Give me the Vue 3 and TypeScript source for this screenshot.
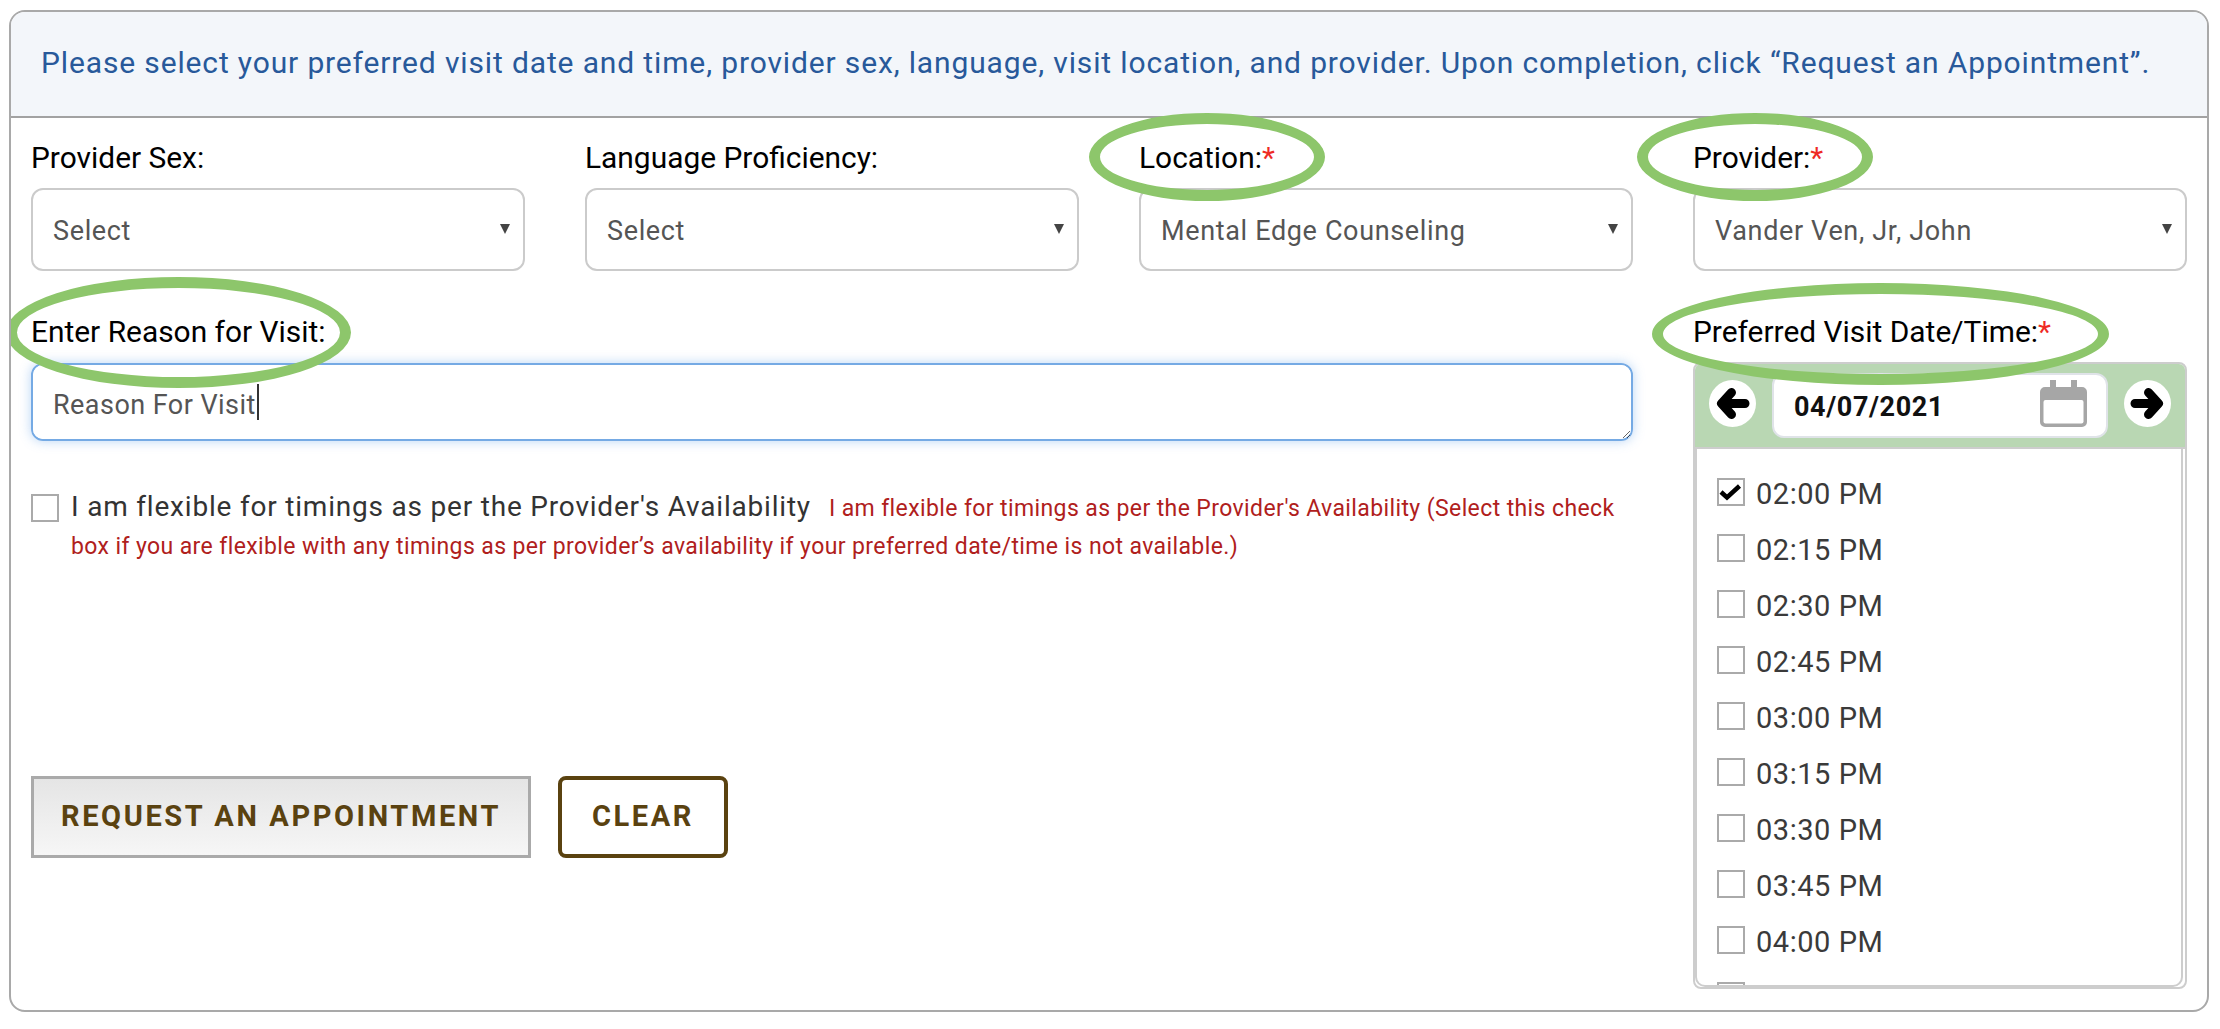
<script setup lang="ts">
const topFields = [
  { label: 'Provider Sex:', value: 'Select', required: false },
  { label: 'Language Proficiency:', value: 'Select', required: false },
  { label: 'Location:', value: 'Mental Edge Counseling', required: true },
  { label: 'Provider:', value: 'Vander Ven, Jr, John', required: true },
]
const reason = 'Reason For Visit'
const times = ['02:00 PM', '02:15 PM', '02:30 PM', '02:45 PM', '03:00 PM', '03:15 PM', '03:30 PM', '03:45 PM', '04:00 PM', '04:15 PM']
</script>

<template>
  <div class="page">
    <div class="card">
      <div class="notice">Please select your preferred visit date and time, provider sex, language, visit location, and provider. Upon completion, click “Request an Appointment”.</div>
      <div class="form">
        <div v-for="f in topFields" :key="f.label" class="field">
          <label class="label">{{ f.label }}<span v-if="f.required" class="req">*</span></label>
          <div class="select-wrap">
            <select class="select"><option>{{ f.value }}</option></select>
          </div>
        </div>

        <div class="left">
          <label class="label">Enter Reason for Visit:</label>
          <div class="reason-wrap">
            <textarea class="reason" :value="reason"></textarea>
            <span class="caret"></span>
          </div>
          <div class="flex-row">
            <span class="box big"></span>
            <div class="flex-text">I am flexible for timings as per the Provider's Availability<span class="hint">I am flexible for timings as per the Provider's Availability (Select this check box if you are flexible with any timings as per provider’s availability if your preferred date/time is not available.)</span></div>
          </div>
          <div class="actions">
            <button class="btn primary"><span class="btn-text">REQUEST AN APPOINTMENT</span></button>
            <button class="btn outline"><span class="btn-text">CLEAR</span></button>
          </div>
        </div>

        <div class="right">
          <label class="label">Preferred Visit Date/Time:<span class="req">*</span></label>
          <div class="panel">
            <div class="panel-head">
              <svg class="nav" viewBox="0 0 47 47">
                <circle cx="23.5" cy="23.5" r="23.5" fill="#fff" />
                <path d="M22.5 12.5 L12.5 23.5 L22.5 34.5 M14 23.5 H36" fill="none" stroke="#000" stroke-width="9" stroke-linecap="round" stroke-linejoin="round" />
              </svg>
              <div class="date">
                <span class="date-text">04/07/2021</span>
                <svg class="cal" viewBox="0 0 47 47">
                  <path d="M10 0h6v7h15V0h6v7h5a5 5 0 0 1 5 5v30a5 5 0 0 1-5 5H5a5 5 0 0 1-5-5V12a5 5 0 0 1 5-5h5z" fill="#a6a6a6" />
                  <rect x="3.5" y="20" width="40" height="23.5" rx="2" fill="#fff" />
                </svg>
              </div>
              <svg class="nav" viewBox="0 0 47 47">
                <circle cx="23.5" cy="23.5" r="23.5" fill="#fff" />
                <path d="M24.5 12.5 L34.5 23.5 L24.5 34.5 M33 23.5 H11" fill="none" stroke="#000" stroke-width="9" stroke-linecap="round" stroke-linejoin="round" />
              </svg>
            </div>
            <div class="list">
              <div v-for="(t, i) in times" :key="t" class="slot">
                <span class="box">
                  <svg v-if="i === 0" viewBox="0 0 23 23" class="tick"><path d="M2 12 L8 17.5 L20.5 6" fill="none" stroke="#000" stroke-width="4.5" /></svg>
                </span>
                <span class="time">{{ t }}</span>
              </div>
            </div>
          </div>
        </div>

        <span class="ring ring-location"></span>
        <span class="ring ring-provider"></span>
        <span class="ring ring-reason"></span>
        <span class="ring ring-date"></span>
      </div>
    </div>
  </div>
</template>

<style>
html, body { margin: 0; background: #fff; }
</style>

<style scoped>
* { box-sizing: border-box; }
.page {
  width: 2220px;
  height: 1029px;
  padding: 10px 11px 17px 9px;
  font-family: Roboto, "Liberation Sans", sans-serif;
  overflow: hidden;
}
.card {
  height: 1002px;
  border: 2px solid #a9a9a9;
  border-radius: 16px;
  overflow: hidden;
}
.notice {
  height: 106px;
  padding: 0 0 0 30px;
  background: #f3f6fa;
  border-bottom: 2px solid #a2a2a2;
  color: #28599a;
  font-size: 30px;
  letter-spacing: 0.86px;
  line-height: 102px;
  white-space: nowrap;
}
.form {
  position: relative;
  display: grid;
  grid-template-columns: repeat(4, 494px);
  column-gap: 60px;
  row-gap: 41px;
  align-items: start;
  padding: 20px 20px 0;
}
.label {
  display: block;
  height: 38px;
  margin-bottom: 12px;
  color: #000;
  font-size: 29.9px;
  line-height: 40px;
}
.req { color: #ee2a24; }
.select-wrap { position: relative; }
.select-wrap::after {
  content: "";
  position: absolute;
  right: 15px;
  top: 36px;
  border-left: 5px solid transparent;
  border-right: 5px solid transparent;
  border-top: 10px solid #444;
}
.select {
  display: block;
  width: 100%;
  height: 83px;
  padding: 2px 20px 0;
  appearance: none;
  background: #fff;
  border: 2px solid #cbcbcb;
  border-radius: 12px;
  color: #555;
  font: 400 27px Roboto, sans-serif;
  letter-spacing: 0.65px;
}
.left { grid-column: span 3; }
.reason-wrap { position: relative; height: 78px; margin-top: 13px; }
.reason {
  display: block;
  width: 100%;
  height: 78px;
  padding: 22px 20px 20px;
  background: #fff;
  border: 2px solid #75aae4;
  border-radius: 12px;
  box-shadow: 0 0 12px rgba(80, 150, 230, 0.4);
  color: #555;
  font: 400 27px/36px Roboto, sans-serif;
  letter-spacing: 0.45px;
  outline: none;
  resize: both;
}
.caret {
  position: absolute;
  left: 226px;
  top: 21px;
  width: 2px;
  height: 36px;
  background: #333;
}
.flex-row {
  display: flex;
  margin-top: 47px;
  gap: 12px;
}
.box {
  display: block;
  flex: none;
  width: 28px;
  height: 28px;
  border: 2.5px solid #aaa;
  background: #fff;
}
.box.big { margin-top: 6px; }
.flex-text {
  color: #333;
  font-size: 28px;
  letter-spacing: 0.8px;
  line-height: 38px;
}
.hint {
  margin-left: 18px;
  color: #b0201c;
  font-size: 23px;
  letter-spacing: 0.39px;
  line-height: 1;
}
.actions {
  display: flex;
  gap: 27px;
  margin-top: 212px;
}
.btn {
  height: 82px;
  color: #5a4210;
  font: 700 29px Roboto, sans-serif;
  letter-spacing: 2.6px;
  cursor: pointer;
}
.btn-text { position: relative; top: -1px; }
.primary {
  width: 500px;
  background: linear-gradient(#e5e5e5, #f6f6f6);
  border: 3px solid #aaa;
}
.outline {
  width: 170px;
  background: #fff;
  border: 4px solid #5a4210;
  border-radius: 8px;
}
.panel {
  height: 627px;
  border: 2px solid #cdcdcd;
  border-radius: 8px;
  overflow: hidden;
}
.panel-head {
  display: flex;
  align-items: center;
  height: 85px;
  padding: 0 14px;
  background: #b9d7b3;
  border-bottom: 2px solid #cdcdcd;
}
.nav { flex: none; width: 47px; height: 47px; margin-bottom: 4px; }
.date {
  display: flex;
  align-items: center;
  justify-content: space-between;
  width: 336px;
  height: 65px;
  margin: 0 16px;
  padding: 0 19px 0 20px;
  background: #fff;
  border: 2px solid #dfe3e8;
  border-radius: 12px;
  color: #111;
  font-size: 27px;
  font-weight: 700;
  letter-spacing: 0.6px;
}
.date-text { padding-top: 2px; }
.cal { width: 47px; height: 47px; margin-bottom: 4px; }
.list {
  height: 538px;
  margin-right: 2px;
  padding: 15px 0 0 20px;
  border: solid #cdcdcd;
  border-width: 0 2px 2px 2px;
  border-radius: 0 0 10px 10px;
  background: #fff;
  color: #3a3a3a;
  font-size: 29px;
  letter-spacing: 0.55px;
  overflow: hidden;
}
.slot {
  display: flex;
  align-items: center;
  gap: 11px;
  height: 56px;
}
.time { padding-top: 3px; }
.tick { display: block; width: 23px; height: 23px; }
.ring {
  position: absolute;
  border: 11px solid #8dc66b;
  border-radius: 50%;
  pointer-events: none;
}
.ring-location { left: 1078px; top: -5px; width: 236px; height: 88px; }
.ring-provider { left: 1626px; top: -5px; width: 236px; height: 88px; }
.ring-reason { left: -5px; top: 159px; width: 345px; height: 111px; }
.ring-date { left: 1641px; top: 165px; width: 457px; height: 102px; }
</style>
